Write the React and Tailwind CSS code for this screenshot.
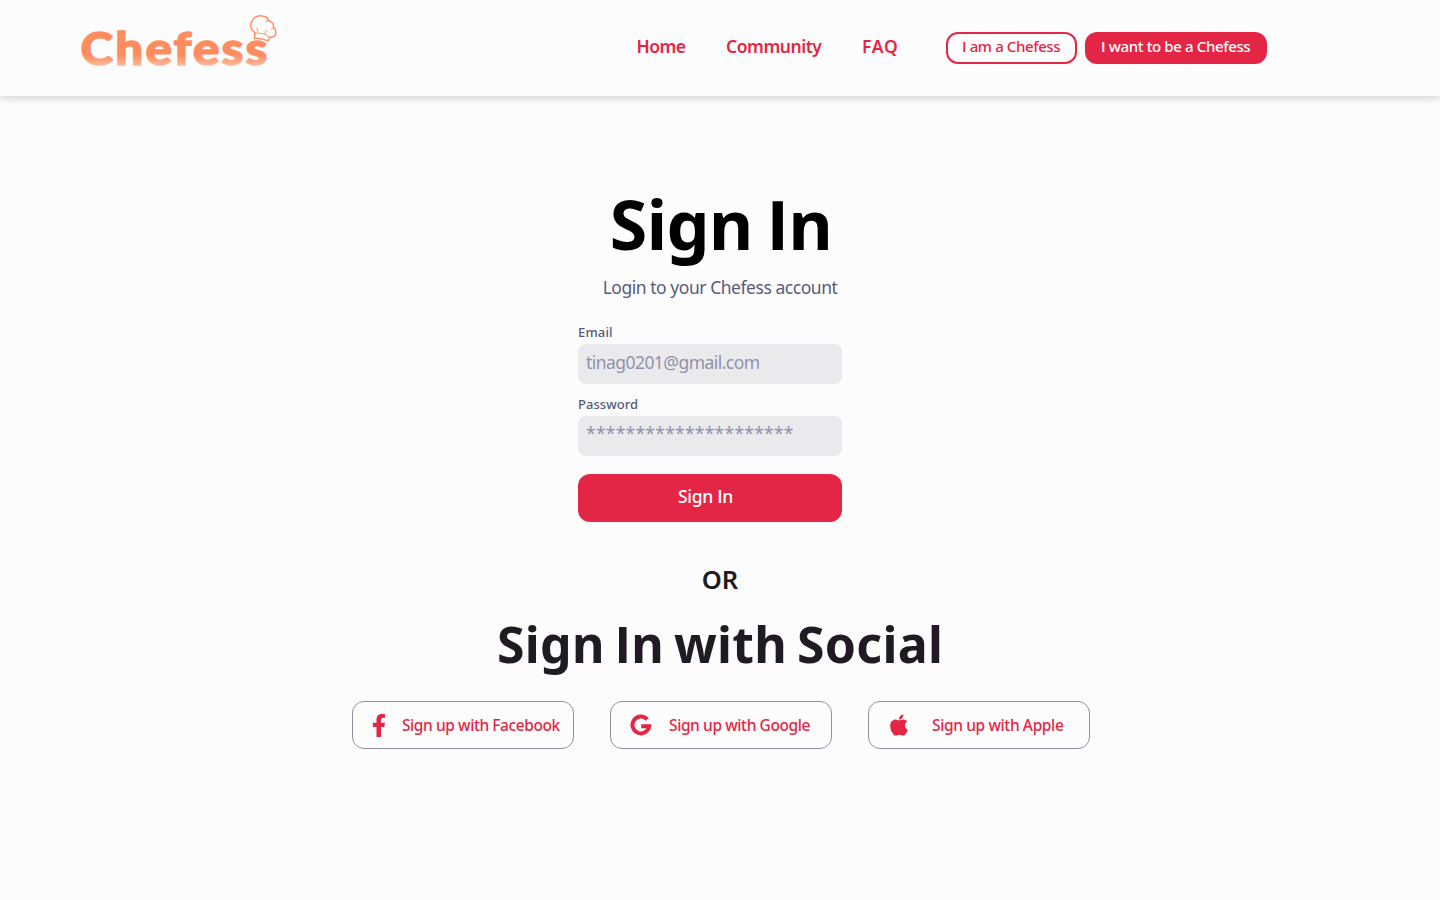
import { FaFacebookF, FaApple } from "react-icons/fa";

const I = ({ className = "" }) => <span className={`font-['Open_Sans'] ${className}`}>I</span>;

function Logo() {
  return (
    <svg className="block h-[72px] w-[220px] overflow-visible" viewBox="70 6 220 72" role="img" aria-label="Chefess">
      <defs>
        <linearGradient id="logo-fill" gradientUnits="userSpaceOnUse" x1="0" y1="30" x2="0" y2="68">
          <stop offset="0.66" stopColor="#ff8c5f" />
          <stop offset="1" stopColor="#ffc4ac" />
        </linearGradient>
      </defs>
      <text x="80.6" y="65.4" fontFamily="Lato, sans-serif" fontWeight="900" fontSize="46" letterSpacing="2" textLength="189" lengthAdjust="spacingAndGlyphs" fill="url(#logo-fill)" stroke="url(#logo-fill)" strokeWidth="1.4">
        Chefess
      </text>
      <path
        d="M254.5 38.5 L254.8 32.5 C251.5 30.5 250.2 26.5 251.2 22.8 C252.5 18 257 15.4 261.5 15.8 C265 16 267.8 18.4 268.8 21 C272.2 21.6 273.6 24 273.4 26.8 C275.6 29.5 276.8 32.5 275.2 35 C273.8 37.2 271.4 37.4 269.6 37 L268 41 C263.5 38.6 259 38 254.5 38.5 Z"
        fill="#fcfcfc" stroke="#ff8c5f" strokeWidth="1.4" strokeLinejoin="round"
      />
      <path d="M254.8 33.2 C260 32.4 265.5 34 269.6 37 M257.8 32 L256.8 28 M264.5 33.5 L266.5 30.5 M265.4 21.6 C266.5 20.8 267.8 20.8 268.8 21 M273.4 26.8 C273 28.2 272.4 29 271.4 29.4" fill="none" stroke="#ff8c5f" strokeWidth="0.9" strokeLinecap="round" />
    </svg>
  );
}

function GoogleIcon() {
  return (
    <svg className="size-[22px]" viewBox="0 0 22 22" fill="none">
      <path d="M17.2 5.4 A8.4 8.4 0 1 0 19.2 12.3 H11.2" stroke="#e42646" strokeWidth="4" />
    </svg>
  );
}

function SocialButton({ icon, className, children }) {
  return (
    <button className={`flex h-12 w-[222px] items-center rounded-xl border border-[#9191a6] text-[15.5px] font-medium whitespace-nowrap text-[#e42646] ${className}`}>
      {icon}
      <span className="pt-0.5">{children}</span>
    </button>
  );
}

export default function App() {
  return (
    <div className="min-h-screen bg-[#fcfcfc] font-['Noto_Sans',sans-serif]">
      <header className="flex h-24 items-start pl-[70px] shadow-[0_2px_8px_rgba(0,0,0,0.18)]">
        <div className="mt-1.5 w-[566.5px]">
          <Logo />
        </div>
        <nav className="mt-[34px] flex text-[17.5px] leading-6 font-semibold text-[#e42646]">
          <a className="w-[89.5px] tracking-[-0.5px]">Home</a>
          <a className="w-[136px] tracking-[-0.45px]">Community</a>
          <a className="w-[84px] tracking-[0.8px]">FAQ</a>
        </nav>
        <div className="mt-8 flex gap-2 text-[15px] leading-6 font-medium whitespace-nowrap">
          <button className="flex h-8 w-[131px] items-start rounded-xl border-2 border-[#e42646] pl-[14px] tracking-[-0.4px] text-[#e42646]">
            <span><I className="font-semibold" /> am a Chefess</span>
          </button>
          <button className="flex h-8 w-[182px] items-start rounded-xl border-2 border-[#e42646] bg-[#e42646] pl-[14px] tracking-[-0.37px] text-white">
            <span><I className="font-semibold" /> want to be a Chefess</span>
          </button>
        </div>
      </header>

      <main className="flex flex-col items-center">
        <h1 className="mt-[88px] pl-0.5 text-[68px] leading-[80px] font-bold tracking-[-0.5px] text-black [word-spacing:-3.5px]">
          Sign <I />n
        </h1>
        <p className="mt-[11px] text-[17.5px] leading-6 tracking-[-0.46px] text-[#5a5a7a]">Login to your Chefess account</p>

        <form className="mt-[25px] mr-5 flex w-[264px] flex-col">
          <label className="text-[13px] leading-4 font-medium tracking-[0.15px] text-[#5a5a7a]">Email</label>
          <div className="mt-1 h-10 rounded-lg bg-[#eaeaec] pl-2 text-[17.5px] leading-[37px] tracking-[-0.55px] text-[#9191ab]">tinag0201@gmail.com</div>
          <label className="mt-3 text-[13px] leading-4 font-medium tracking-[0.05px] text-[#5a5a7a]">Password</label>
          <div className="mt-1 h-10 rounded-lg bg-[#eaeaec] pl-2 text-[17.5px] leading-[34px] tracking-[0.25px] text-[#9191ab]">*********************</div>
          <button type="button" className="mt-[18px] flex h-12 justify-center rounded-xl bg-[#e42646] pr-[9px] text-[17.5px] leading-[44px] font-medium tracking-[-0.3px] text-white">
            <span>Sign <I className="font-semibold" />n</span>
          </button>
        </form>

        <div className="mt-[41px] text-[25.5px] leading-8 font-semibold text-[#201a23]">OR</div>
        <h2 className="mt-[17px] text-[50px] leading-[64px] font-bold tracking-[0.3px] text-[#201a23] [word-spacing:-3.5px]">
          Sign <I />n with Social
        </h2>

        <div className="mt-[25px] ml-0.5 flex gap-9">
          <SocialButton className="gap-[11px] pl-[14px] tracking-[-0.42px]" icon={<FaFacebookF className="h-[23px] w-6" />}>
            Sign up with Facebook
          </SocialButton>
          <SocialButton className="gap-[17px] pl-[19px] tracking-[-0.4px]" icon={<GoogleIcon />}>
            Sign up with Google
          </SocialButton>
          <SocialButton className="gap-[21px] pl-[18px] tracking-[-0.38px]" icon={<FaApple className="size-6" />}>
            Sign up with Apple
          </SocialButton>
        </div>
      </main>
    </div>
  );
}
